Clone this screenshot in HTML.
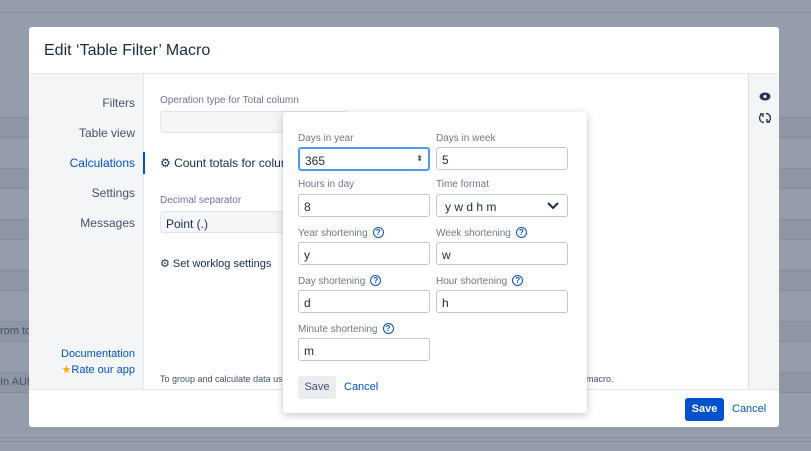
<!DOCTYPE html>
<html><head><style>
*{box-sizing:border-box;margin:0;padding:0}
body{width:811px;height:451px;overflow:hidden;font-family:"Liberation Sans",sans-serif;background:#959dab;position:relative;color:#172b4d}
.band{position:absolute;left:0;width:811px;height:21px;background:#8e95a3;border-top:1px solid #868d9b;border-bottom:1px solid #868d9b}
.modal{position:absolute;left:29px;top:27px;width:750px;height:400px;background:#fff;border-radius:3px;overflow:hidden}
.hdr{position:absolute;left:0;top:0;width:750px;height:47px;border-bottom:1px solid #e4e6ea}
.hdr h1{position:absolute;left:15px;top:15px;font-size:16px;font-weight:normal;color:#172b4d}
.side{position:absolute;left:0;top:47px;width:115px;height:315px;background:#f4f5f7;border-right:1px solid #e4e6ea}
.side div{position:absolute;right:8px;font-size:12px;color:#42526e}
.rail{position:absolute;left:719px;top:47px;width:31px;height:315px;background:#f4f5f7;border-left:1px solid #ddd}
.foot{position:absolute;left:0;top:362px;width:750px;height:38px;border-top:1px solid #e4e6ea;background:#fff}
.lbl{position:absolute;font-size:10px;color:#6b778c}
.inp{position:absolute;border:1px solid #c1c7d0;border-radius:3px;background:#fff;font-size:12px;color:#172b4d;padding:5px 0 0 5px;height:23px}
.pop{position:absolute;left:283px;top:112px;width:304px;height:301px;background:#fff;border-radius:3px;box-shadow:0 2px 8px rgba(9,30,66,.25)}
.q{display:inline-block;width:11px;height:11px;border:1.3px solid #0052cc;border-radius:50%;font-size:8px;line-height:9px;text-align:center;color:#0052cc;margin-left:5px;font-weight:bold;vertical-align:1px}
</style></head><body>
<div class="band" style="top:117px"></div><div class="band" style="top:168px"></div><div class="band" style="top:219px"></div><div class="band" style="top:270px"></div><div class="band" style="top:321px"></div><div class="band" style="top:372px"></div>
<div style="position:absolute;left:0;top:12px;width:811px;height:1px;background:#868d9b"></div>
<div style="position:absolute;left:0;top:437px;width:811px;height:1px;background:#868d9b"></div>
<div style="position:absolute;left:0;top:441px;width:811px;height:1px;background:#868d9b"></div>
<div style="position:absolute;left:0;top:325px;font-size:11px;color:#42526e">rom to</div>
<div style="position:absolute;left:0;top:376px;font-size:11px;color:#42526e">In AUD</div>
<div class="modal">
<div class="hdr"><h1>Edit ‘Table Filter’ Macro</h1></div>
<div class="side">
<div style="top:22px">Filters</div>
<div style="top:52px">Table view</div>
<div style="top:82px;color:#0052cc">Calculations</div>
<div style="top:112px">Settings</div>
<div style="top:142px">Messages</div>
<div style="top:274px;color:#0052cc;font-size:11px">Documentation</div>
<div style="top:289px;color:#0052cc;font-size:11px"><span style="color:#ffab00">★</span>Rate our app</div>
</div>
<div style="position:absolute;left:114px;top:125px;width:2px;height:22px;background:#0052cc"></div>
<div class="lbl" style="left:131px;top:68px">Operation type for Total column</div>
<div class="inp" style="left:131px;top:84px;width:188px;height:22px;background:#f4f5f7;border-color:#e4e6ea"></div>
<div style="position:absolute;left:131px;top:129px;font-size:12px;color:#172b4d">⚙ Count totals for column</div>
<div class="lbl" style="left:131px;top:168px">Decimal separator</div>
<div class="inp" style="left:131px;top:184px;width:160px;height:22px;background:#f4f5f7;border-color:#e4e6ea">Point (.)</div>
<div style="position:absolute;left:131px;top:230px;font-size:11px;color:#172b4d">⚙ Set worklog settings</div>
<div style="position:absolute;left:131px;top:347px;font-size:9px;color:#42526e">To group and calculate data us</div>
<div style="position:absolute;left:557px;top:347px;font-size:9px;color:#42526e">macro.</div>
<div class="rail">
<svg style="position:absolute;left:10px;top:18px" width="12" height="9" viewBox="0 0 12 9"><ellipse cx="6" cy="4.5" rx="5.5" ry="4" fill="#253858"/><circle cx="6" cy="4.5" r="1.5" fill="#fff"/></svg>
<svg style="position:absolute;left:10px;top:38px" width="12" height="12" viewBox="0 0 12 12" fill="none" stroke="#253858" stroke-width="1.4"><path d="M3 2 A4.5 4.5 0 0 0 5 10.5"/><path d="M9 10 A4.5 4.5 0 0 0 7 1.5"/><path d="M1 2h3v3M11 10H8V7"/></svg>
</div>
<div class="foot">
<div style="position:absolute;left:656px;top:8px;width:39px;height:23px;background:#0052cc;border-radius:3px;color:#fff;font-weight:bold;font-size:11px;text-align:center;line-height:23px">Save</div>
<div style="position:absolute;left:703px;top:13px;font-size:11px;color:#0052cc">Cancel</div>
</div>
</div>
<div class="pop">
<div class="lbl" style="left:15px;top:21px">Days in year</div>
<div class="inp" style="left:15px;top:35px;width:132px;height:24px;border:2px solid #4c9aff">365<span style="position:absolute;right:5px;top:5px;font-size:8px;color:#42526e">⬍</span></div>
<div class="lbl" style="left:153px;top:21px">Days in week</div>
<div class="inp" style="left:153px;top:35px;width:132px;height:23px">5</div>
<div class="lbl" style="left:15px;top:67px">Hours in day</div>
<div class="inp" style="left:15px;top:82px;width:132px">8</div>
<div class="lbl" style="left:153px;top:67px">Time format</div>
<div class="inp" style="left:153px;top:82px;width:132px;padding-left:8px">y w d h m<svg style="position:absolute;right:8px;top:7px" width="12" height="8" viewBox="0 0 12 8"><path d="M1 1l5 5 5-5" fill="none" stroke="#172b4d" stroke-width="2"/></svg></div>
<div class="lbl" style="left:15px;top:115px">Year shortening<span class="q">?</span></div>
<div class="inp" style="left:15px;top:130px;width:132px">y</div>
<div class="lbl" style="left:153px;top:115px">Week shortening<span class="q">?</span></div>
<div class="inp" style="left:153px;top:130px;width:132px">w</div>
<div class="lbl" style="left:15px;top:163px">Day shortening<span class="q">?</span></div>
<div class="inp" style="left:15px;top:178px;width:132px">d</div>
<div class="lbl" style="left:153px;top:163px">Hour shortening<span class="q">?</span></div>
<div class="inp" style="left:153px;top:178px;width:132px">h</div>
<div class="lbl" style="left:15px;top:211px">Minute shortening<span class="q">?</span></div>
<div class="inp" style="left:15px;top:226px;width:132px">m</div>
<div style="position:absolute;left:15px;top:264px;width:38px;height:23px;background:#ebecf0;border-radius:3px;font-size:11px;color:#42526e;text-align:center;line-height:23px">Save</div>
<div style="position:absolute;left:61px;top:269px;font-size:11px;color:#0052cc">Cancel</div>
</div>
</body></html>
